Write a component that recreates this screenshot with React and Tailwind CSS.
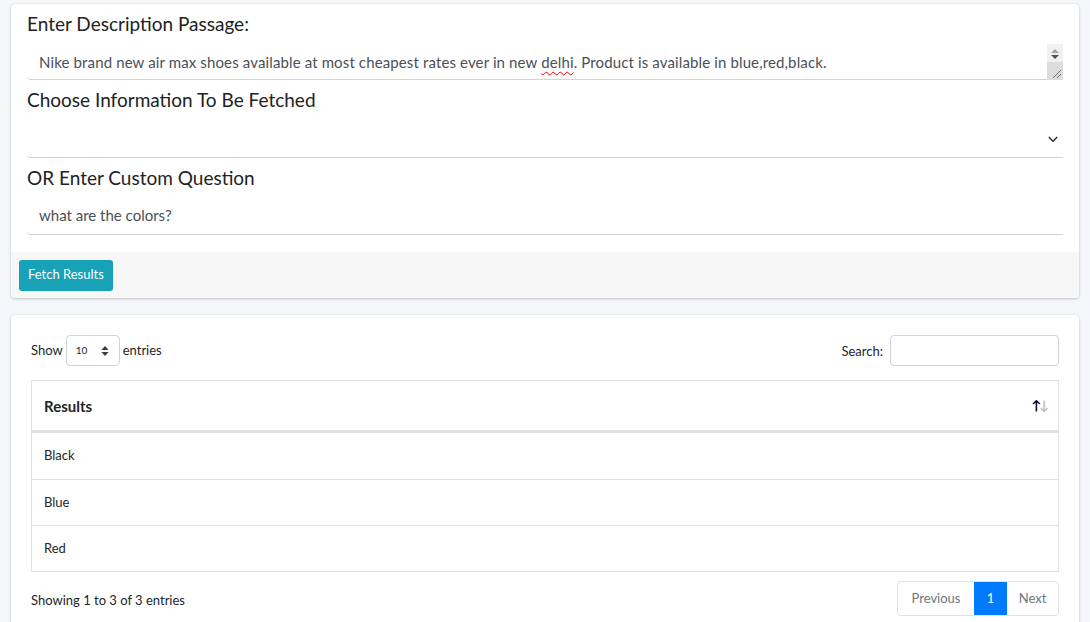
import React from "react";

export default function App() {
  return (
    <div className="min-h-[622px] w-[1090px] bg-[#f4f6f9] pt-[4px] px-[11px] pr-[11px] font-['Lato','Liberation_Sans',sans-serif] text-[#212529]">
      {/* Card 1 */}
      <div className="rounded-[4px] bg-white shadow-[0_0_1px_rgba(0,0,0,0.125),0_1px_3px_rgba(0,0,0,0.2)] overflow-hidden">
        <div className="px-[16px] pt-[6px] pb-[17px]">
          <div className="h-[28px] leading-[28px] text-[19px] text-[#222]">Enter Description Passage:</div>
          <div className="mt-[4px] relative h-[38px] border-b border-[#ced4da] rounded-bl-[4px]">
            <div className="h-full pl-[12px] pr-[20px] pt-[9px] text-[15px] leading-[22px] tracking-[0.13px] text-[#495057] whitespace-nowrap overflow-hidden">
              Nike brand new air max shoes available at most cheapest rates ever in new{" "}
              <span className="underline decoration-wavy decoration-[#e00] decoration-[1px] underline-offset-[3px]">delhi</span>. Product is available in blue,red,black.
            </div>
            <div className="absolute right-0 top-[2px] w-[16px] h-[36px] bg-[#f1f1f1] flex flex-col items-center">
              <div className="h-[18px] flex flex-col items-center justify-center gap-[2px] pt-[2px]">
                <div className="w-0 h-0 border-l-[4px] border-r-[4px] border-b-[4px] border-l-transparent border-r-transparent border-b-[#a3a3a3]"></div>
                <div className="w-0 h-0 border-l-[4px] border-r-[4px] border-t-[4px] border-l-transparent border-r-transparent border-t-[#505050]"></div>
              </div>
              <div className="h-[18px] w-full bg-[#dcdcdc] relative">
                <svg width="16" height="18" viewBox="0 0 16 18" className="absolute inset-0">
                  <line x1="6" y1="16" x2="14" y2="8" stroke="#777" strokeWidth="1" />
                  <line x1="10" y1="16" x2="14" y2="12" stroke="#777" strokeWidth="1" />
                </svg>
              </div>
            </div>
          </div>

          <div className="mt-[6px] h-[28px] leading-[28px] text-[19px] text-[#222]">Choose Information To Be Fetched</div>
          <div className="mt-[4px] h-[40px] border-b border-[#ced4da] rounded-bl-[4px] flex items-center justify-end pr-[4px]">
            <svg width="12" height="12" viewBox="0 0 16 16" className="mt-[3px]">
              <path d="M3 6l5 5 5-5" fill="none" stroke="#343a40" strokeWidth="2.2" strokeLinecap="round" strokeLinejoin="round" />
            </svg>
          </div>

          <div className="mt-[6px] h-[28px] leading-[28px] text-[19px] text-[#222]">OR Enter Custom Question</div>
          <div className="mt-[5px] h-[38px] border-b border-[#ced4da] rounded-bl-[4px] flex items-center pl-[12px] text-[15px] text-[#495057]">
            what are the colors?
          </div>
        </div>
        <div className="bg-[#f7f7f7] h-[46px] px-[8px] flex items-center">
          <button className="h-[31px] px-[9px] rounded-[3px] bg-[#17a2b8] text-white text-[13px]">Fetch Results</button>
        </div>
      </div>

      {/* Card 2 */}
      <div className="mt-[17px] rounded-t-[4px] bg-white shadow-[0_0_1px_rgba(0,0,0,0.125),0_1px_3px_rgba(0,0,0,0.2)] px-[20px] pt-[20px] pb-[8px]">
        <div className="flex items-center justify-between h-[31px]">
          <div className="flex items-center text-[13px] text-[#212529]">
            <span>Show</span>
            <div className="ml-[3px] mr-[3px] w-[54px] h-[31px] border border-[#ced4da] rounded-[4px] flex items-center justify-between pl-[9px] pr-[10px]">
              <span className="text-[10px]">10</span>
              <svg width="8" height="12" viewBox="0 0 8 12">
                <path d="M4 1L7.5 5H0.5Z M4 11L0.5 7H7.5Z" fill="#343a40" />
              </svg>
            </div>
            <span>entries</span>
          </div>
          <div className="flex items-center text-[13px]">
            <span className="mr-[7px] mt-[2px]">Search:</span>
            <div className="w-[169px] h-[31px] border border-[#ced4da] rounded-[4px]"></div>
          </div>
        </div>

        <div className="mt-[14px] border border-[#dee2e6]">
          <div className="h-[52px] border-b-[3px] border-[#dee2e6] flex items-center justify-between pl-[12px] pr-[11px]">
            <span className="text-[15px] font-bold mt-[1px]">Results</span>
            <span className="text-[13px] font-bold tracking-[-2px]">
              <span className="text-black">↑</span>
              <span className="text-[#bbb]">↓</span>
            </span>
          </div>
          {["Black", "Blue", "Red"].map((r, i) => (
            <div key={r} className={`h-[46px] flex items-center pl-[12px] text-[13px] ${i > 0 ? "border-t border-[#dee2e6]" : ""}`}>
              {r}
            </div>
          ))}
        </div>

        <div className="mt-[9px] flex items-center justify-between">
          <span className="text-[13px] mt-[4px]">Showing 1 to 3 of 3 entries</span>
          <div className="flex h-[35px] text-[13px] border border-[#dee2e6] rounded-[4px] overflow-hidden">
            <div className="w-[76px] flex items-center justify-center text-[#6c757d]">Previous</div>
            <div className="w-[33px] flex items-center justify-center bg-[#007bff] text-white">1</div>
            <div className="w-[51px] flex items-center justify-center text-[#6c757d]">Next</div>
          </div>
        </div>
      </div>
    </div>
  );
}
